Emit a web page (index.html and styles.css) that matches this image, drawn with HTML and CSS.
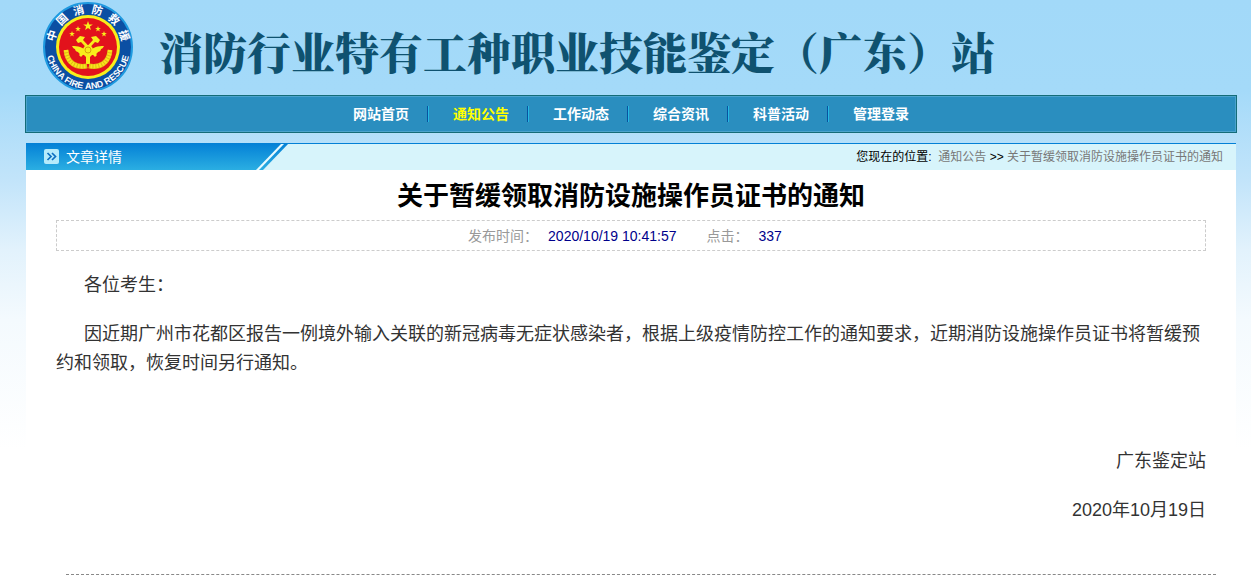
FILE: index.html
```
<!DOCTYPE html>
<html lang="zh-CN">
<head>
    <meta charset="UTF-8">
    <meta name="viewport" content="width=device-width, initial-scale=1.0">
    <title>关于暂缓领取消防设施操作员证书的通知</title>
    <link rel="stylesheet" href="styles.css">
</head>
<body>
    <div class="page">
        <header class="header">
            <svg class="logo" viewBox="0 0 92 89" role="img" aria-label="中国消防救援">
                <defs>
                    <path id="arc-top" d="M12 46 A34 34 0 0 1 80 46"/>
                    <path id="arc-bottom" d="M4 46 A42 42 0 0 0 88 46"/>
                    <path id="star" d="M0 -5 L1.2 -1.6 L4.8 -1.5 L1.9 0.6 L2.9 4 L0 2 L-2.9 4 L-1.9 0.6 L-4.8 -1.5 L-1.2 -1.6 Z"/>
                </defs>
                <circle cx="46" cy="46" r="44" fill="#0b4fa3" stroke="#1f9ae0" stroke-width="2"/>
                <circle cx="46" cy="46" r="32" fill="#f8ee1c"/>
                <circle cx="46" cy="46" r="29" fill="#e2121c"/>
                <g fill="#f8ee1c">
                    <use href="#star" x="46" y="25"/>
                    <use href="#star" transform="translate(36 28) scale(.6)"/>
                    <use href="#star" transform="translate(56 28) scale(.6)"/>
                    <use href="#star" transform="translate(30 33) scale(.6)"/>
                    <use href="#star" transform="translate(62 33) scale(.6)"/>
                    <path d="M30 45 C36 45 41 46 44 50 L48 50 C51 46 56 45 62 45 C61 47 60 48 59 48 C59 50 57 51 56 51 C55 53 53 54 50 54 L48 56 L48 63 L44 63 L44 56 L42 54 C39 54 37 53 36 51 C35 51 33 50 33 48 C32 48 31 47 30 45 Z"/>
                    <path d="M34 39 L38 35 L43 36 L41 39 L55 54 L53 56 L39 41 L36 42 Z"/>
                    <path d="M58 39 L54 35 L49 36 L51 39 L37 54 L39 56 L53 41 L56 42 Z"/>
                    <circle cx="46" cy="49" r="5"/>
                </g>
                <circle cx="46" cy="49" r="3" fill="none" stroke="#d8a010"/>
                <path d="M24 49 C25 62 34 67 45 65 M68 49 C67 62 58 67 47 65" fill="none" stroke="#dfb814" stroke-width="5"/>
                <path d="M24 49 C25 62 34 67 45 65 M68 49 C67 62 58 67 47 65" fill="none" stroke="#f8e41c" stroke-width="4" stroke-dasharray="2 1"/>
                <text class="logo-cn"><textPath href="#arc-top" startOffset="50%">中&nbsp;&nbsp;国&nbsp;&nbsp;消&nbsp;&nbsp;防&nbsp;&nbsp;救&nbsp;&nbsp;援</textPath></text>
                <text class="logo-en"><textPath href="#arc-bottom" startOffset="50%">CHINA FIRE AND RESCUE</textPath></text>
            </svg>
            <h1 class="site-name">消防行业特有工种职业技能鉴定（广东）站</h1>
        </header>

        <nav class="nav">
            <ul>
                <li><a href="#">网站首页</a></li>
                <li><a href="#" class="active">通知公告</a></li>
                <li><a href="#">工作动态</a></li>
                <li><a href="#">综合资讯</a></li>
                <li><a href="#">科普活动</a></li>
                <li><a href="#">管理登录</a></li>
            </ul>
        </nav>

        <main class="main">
            <div class="title-bar">
                <h2 class="tab">
                    <svg class="tab-icon" viewBox="0 0 15 15" aria-hidden="true">
                        <rect width="15" height="15" rx="2" fill="#b5ebfb"/>
                        <path d="M3.5 4 L7 7.5 L3.5 11 M8 4 L11.5 7.5 L8 11" fill="none" stroke="#0d6fc0" stroke-width="1.7"/>
                    </svg>
                    文章详情
                </h2>
                <svg class="slant" viewBox="0 0 33 27" aria-hidden="true">
                    <defs>
                        <linearGradient id="bar" x1="0" y1="0" x2="0" y2="1">
                            <stop offset="0" stop-color="#0380d6"/>
                            <stop offset="1" stop-color="#2baee2"/>
                        </linearGradient>
                    </defs>
                    <path d="M0 0 H33 L7 27 H0 Z" fill="url(#bar)"/>
                    <path d="M25 1 H28 L3 27 H0 Z" fill="#e6faff"/>
                </svg>
                <div class="crumbs">您现在的位置: &nbsp;<a href="#">通知公告</a> &gt;&gt; <a href="#">关于暂缓领取消防设施操作员证书的通知</a></div>
            </div>

            <article class="article">
                <h1 class="article-title">关于暂缓领取消防设施操作员证书的通知</h1>
                <div class="meta">
                    <span class="label">发布时间：</span>
                    <span class="value date">2020/10/19 10:41:57</span>
                    <span class="label">点击：</span>
                    <span class="value">337</span>
                </div>
                <div class="content">
                    <p>各位考生：</p>
                    <p>因近期广州市花都区报告一例境外输入关联的新冠病毒无症状感染者，根据上级疫情防控工作的通知要求，近期消防设施操作员证书将暂缓预约和领取，恢复时间另行通知。</p>
                    <p>&nbsp;</p>
                    <p class="sign">广东鉴定站</p>
                    <p class="sign">2020年10月19日</p>
                </div>
            </article>
            <hr class="divider">
        </main>
    </div>
</body>
</html>
```

FILE: styles.css
```
* {
    box-sizing: border-box;
}
body {
    margin: 0;
    font-family: "Liberation Sans", "Noto Sans CJK SC", sans-serif;
    font-size: 14px;
    color: #333;
    background: #fff linear-gradient(#a2d9f9 0, #a4daf9 90px, #c2e4fa 180px, #e2f2fc 250px, #f4fafe 320px, #fff 450px) no-repeat;
}
h1, h2, p, ul {
    margin: 0;
    padding: 0;
}
a {
    text-decoration: none;
}
.page {
    padding: 0 14px 0 25px;
}

.header {
    display: flex;
    align-items: flex-start;
    gap: 25px;
    height: 95px;
    padding: 1px 0 0 17px;
}
.logo {
    flex: none;
    width: 92px;
    height: 89px;
}
.logo text {
    fill: #fff;
    font-weight: bold;
    text-anchor: middle;
}
.logo-cn {
    font-size: 11px;
}
.logo-en {
    font-size: 9px;
}
.site-name {
    padding-top: 20px;
    font-family: "Noto Serif CJK SC", "Noto Sans CJK SC", serif;
    font-size: 44px;
    font-weight: 900;
    line-height: 60px;
    color: #0f5270;
    white-space: nowrap;
}

.nav {
    height: 38px;
    background: #2a8ebf;
    border: 1px solid #146c78;
    box-shadow: inset 0 0 0 1px #4ba3cc;
}
.nav ul {
    display: flex;
    justify-content: center;
    align-items: center;
    gap: 24px;
    height: 36px;
    list-style: none;
}
.nav li {
    padding-right: 20px;
    line-height: 16px;
    background: linear-gradient(90deg, #0653a0 50%, #25b9e4 50%) right / 2px 16px no-repeat;
}
.nav li:last-child {
    padding-right: 0;
    background: none;
}
.nav a {
    color: #fff;
    font-weight: bold;
}
.nav a.active {
    color: #ff0;
}

.main {
    margin: 10px 1px 0;
    background: #fff;
}
.title-bar {
    display: flex;
    height: 27px;
    background: #d7f4fb;
    border-top: 1px solid #0380d6;
}
.tab {
    display: flex;
    align-items: center;
    gap: 7px;
    width: 230px;
    height: 27px;
    margin-top: -1px;
    padding-left: 18px;
    background: linear-gradient(#0380d6, #2baee2);
    color: #fff;
    font-size: 14px;
    font-weight: normal;
    line-height: 26px;
}
.tab-icon {
    width: 15px;
    height: 15px;
}
.slant {
    width: 33px;
    height: 27px;
    margin-top: -1px;
}
.crumbs {
    margin-left: auto;
    padding-right: 13px;
    font-size: 12px;
    line-height: 26px;
    color: #000;
}
.crumbs a {
    color: #777;
}

.article {
    padding: 0 30px;
}
.article-title {
    height: 50px;
    font-size: 26px;
    line-height: 52px;
    text-align: center;
    color: #000;
}
.meta {
    display: flex;
    justify-content: center;
    gap: 10px;
    height: 31px;
    padding-right: 12px;
    border: 1px dashed #ccc;
    line-height: 30px;
}
.label {
    color: #999;
}
.value {
    color: #00008b;
}
.date {
    margin-right: 20px;
}
.content {
    padding-top: 20px;
    font-size: 18px;
    line-height: 29px;
}
.content p {
    margin-bottom: 20px;
    text-indent: 28px;
}
.content .sign {
    text-align: right;
}
.divider {
    margin: 49px 20px 0 40px;
    border: 0;
    border-top: 1px dashed #888;
}
```
